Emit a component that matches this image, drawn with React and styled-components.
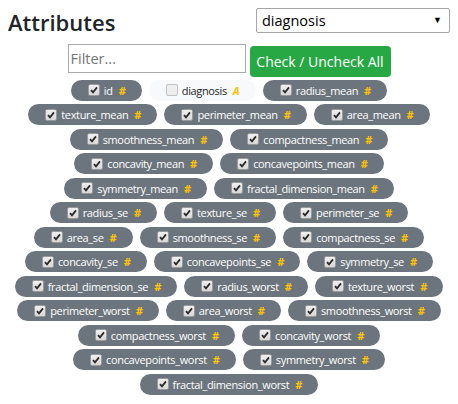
import React, { useState } from 'react'
import styled, { createGlobalStyle } from 'styled-components'

const GlobalStyle = createGlobalStyle`
    body {
        margin: 8px;
        font-family: "Open Sans", "Noto Sans", sans-serif;
        color: #212529;
        background: #fff;
    }
`

const rows = [
    ['id', 'diagnosis', 'radius_mean'],
    ['texture_mean', 'perimeter_mean', 'area_mean'],
    ['smoothness_mean', 'compactness_mean'],
    ['concavity_mean', 'concavepoints_mean'],
    ['symmetry_mean', 'fractal_dimension_mean'],
    ['radius_se', 'texture_se', 'perimeter_se'],
    ['area_se', 'smoothness_se', 'compactness_se'],
    ['concavity_se', 'concavepoints_se', 'symmetry_se'],
    ['fractal_dimension_se', 'radius_worst', 'texture_worst'],
    ['perimeter_worst', 'area_worst', 'smoothness_worst'],
    ['compactness_worst', 'concavity_worst'],
    ['concavepoints_worst', 'symmetry_worst'],
    ['fractal_dimension_worst'],
]

const Header = styled.div`
    display: flex;
    justify-content: space-between;
    align-items: flex-start;
`
const Title = styled.h4`
    margin: 0;
    font-size: 22px;
    font-weight: 600;
    line-height: 29px;
    color: #212529;
`
const SelectWrap = styled.div`
    position: relative;
    width: 194px;
`
const Select = styled.select`
    appearance: none;
    display: block;
    width: 100%;
    height: 25px;
    border: 1px solid #a6a6a6;
    border-radius: 2px;
    background: #fff;
    padding: 0 0 0 5px;
    font-family: inherit;
    font-size: 14.5px;
    color: #000;
`
const Arrow = styled.span`
    position: absolute;
    right: 8px;
    top: 7px;
    font-size: 9px;
    line-height: 9px;
    color: #000;
    pointer-events: none;
`
const Controls = styled.div`
    display: flex;
    justify-content: center;
    align-items: flex-start;
    gap: 4px;
    margin-top: 7px;
`
const FilterInput = styled.input`
    width: 178px;
    height: 29px;
    box-sizing: border-box;
    border: 1px solid #a9a9a9;
    padding: 0 2px;
    font-family: inherit;
    font-size: 14.5px;
    &::placeholder {
        color: #757575;
    }
`
const CheckAllButton = styled.button`
    margin-top: 2px;
    width: 141px;
    height: 31px;
    border: none;
    border-radius: 4px;
    background: #28a745;
    color: #fff;
    font-family: inherit;
    font-size: 14px;
    white-space: nowrap;
    padding: 0;
    cursor: pointer;
`
const Badges = styled.div`
    margin-top: 1px;
    display: flex;
    flex-direction: column;
    align-items: center;
`
const BadgeRow = styled.div`
    display: flex;
    justify-content: center;
`
const Badge = styled.label`
    display: flex;
    align-items: center;
    height: 21px;
    margin: 1.75px 3.5px;
    padding: 0 16px 0 17px;
    border-radius: 11px;
    background: ${({ light }) => (light ? '#f8f9fa' : '#6c757d')};
    color: ${({ light }) => (light ? '#212529' : '#fff')};
    font-size: 11px;
    letter-spacing: -0.35px;
    white-space: nowrap;
`
const Box = styled.span`
    flex: none;
    box-sizing: border-box;
    width: 12px;
    height: 12px;
    margin-right: 4px;
    border: 1px solid ${({ checked }) => (checked ? '#9a9a9a' : '#c2c2c2')};
    border-radius: 2px;
    background: ${({ checked }) => (checked ? 'linear-gradient(#f0f0f0, #d8d8d8)' : '#eeeeee')};
    display: flex;
    align-items: center;
    justify-content: center;
`
const Type = styled.span`
    margin-left: 6px;
    color: #ffc107;
    font-weight: 700;
    font-size: 11px;
    letter-spacing: 0;
    font-style: ${({ italic }) => (italic ? 'italic' : 'normal')};
`

const Check = () => (
    <svg width="8" height="8" viewBox="0 0 8 8">
        <path d="M1 4.2 L3 6.4 L7 1.4" fill="none" stroke="#2a2a2a" strokeWidth="1.8" />
    </svg>
)

const Attribute = ({ name, checked, onToggle }) => {
    const isCategory = name === 'diagnosis'
    return (
        <Badge light={isCategory} onClick={onToggle}>
            <Box checked={checked}>{checked && <Check />}</Box>
            {name}
            <Type italic={isCategory}>{isCategory ? 'A' : '#'}</Type>
        </Badge>
    )
}

const App = () => {
    const [unchecked, setUnchecked] = useState({ diagnosis: true })
    const toggle = (n) => setUnchecked({ ...unchecked, [n]: !unchecked[n] })
    return (
        <>
            <GlobalStyle />
            <Header>
                <Title>Attributes</Title>
                <SelectWrap>
                    <Select defaultValue="diagnosis">
                        <option value="diagnosis">diagnosis</option>
                    </Select>
                    <Arrow>▼</Arrow>
                </SelectWrap>
            </Header>
            <Controls>
                <FilterInput placeholder="Filter..." />
                <CheckAllButton>Check / Uncheck All</CheckAllButton>
            </Controls>
            <Badges>
                {rows.map((row, i) => (
                    <BadgeRow key={i}>
                        {row.map((n) => (
                            <Attribute key={n} name={n} checked={!unchecked[n]} onToggle={() => toggle(n)} />
                        ))}
                    </BadgeRow>
                ))}
            </Badges>
        </>
    )
}

export default App
